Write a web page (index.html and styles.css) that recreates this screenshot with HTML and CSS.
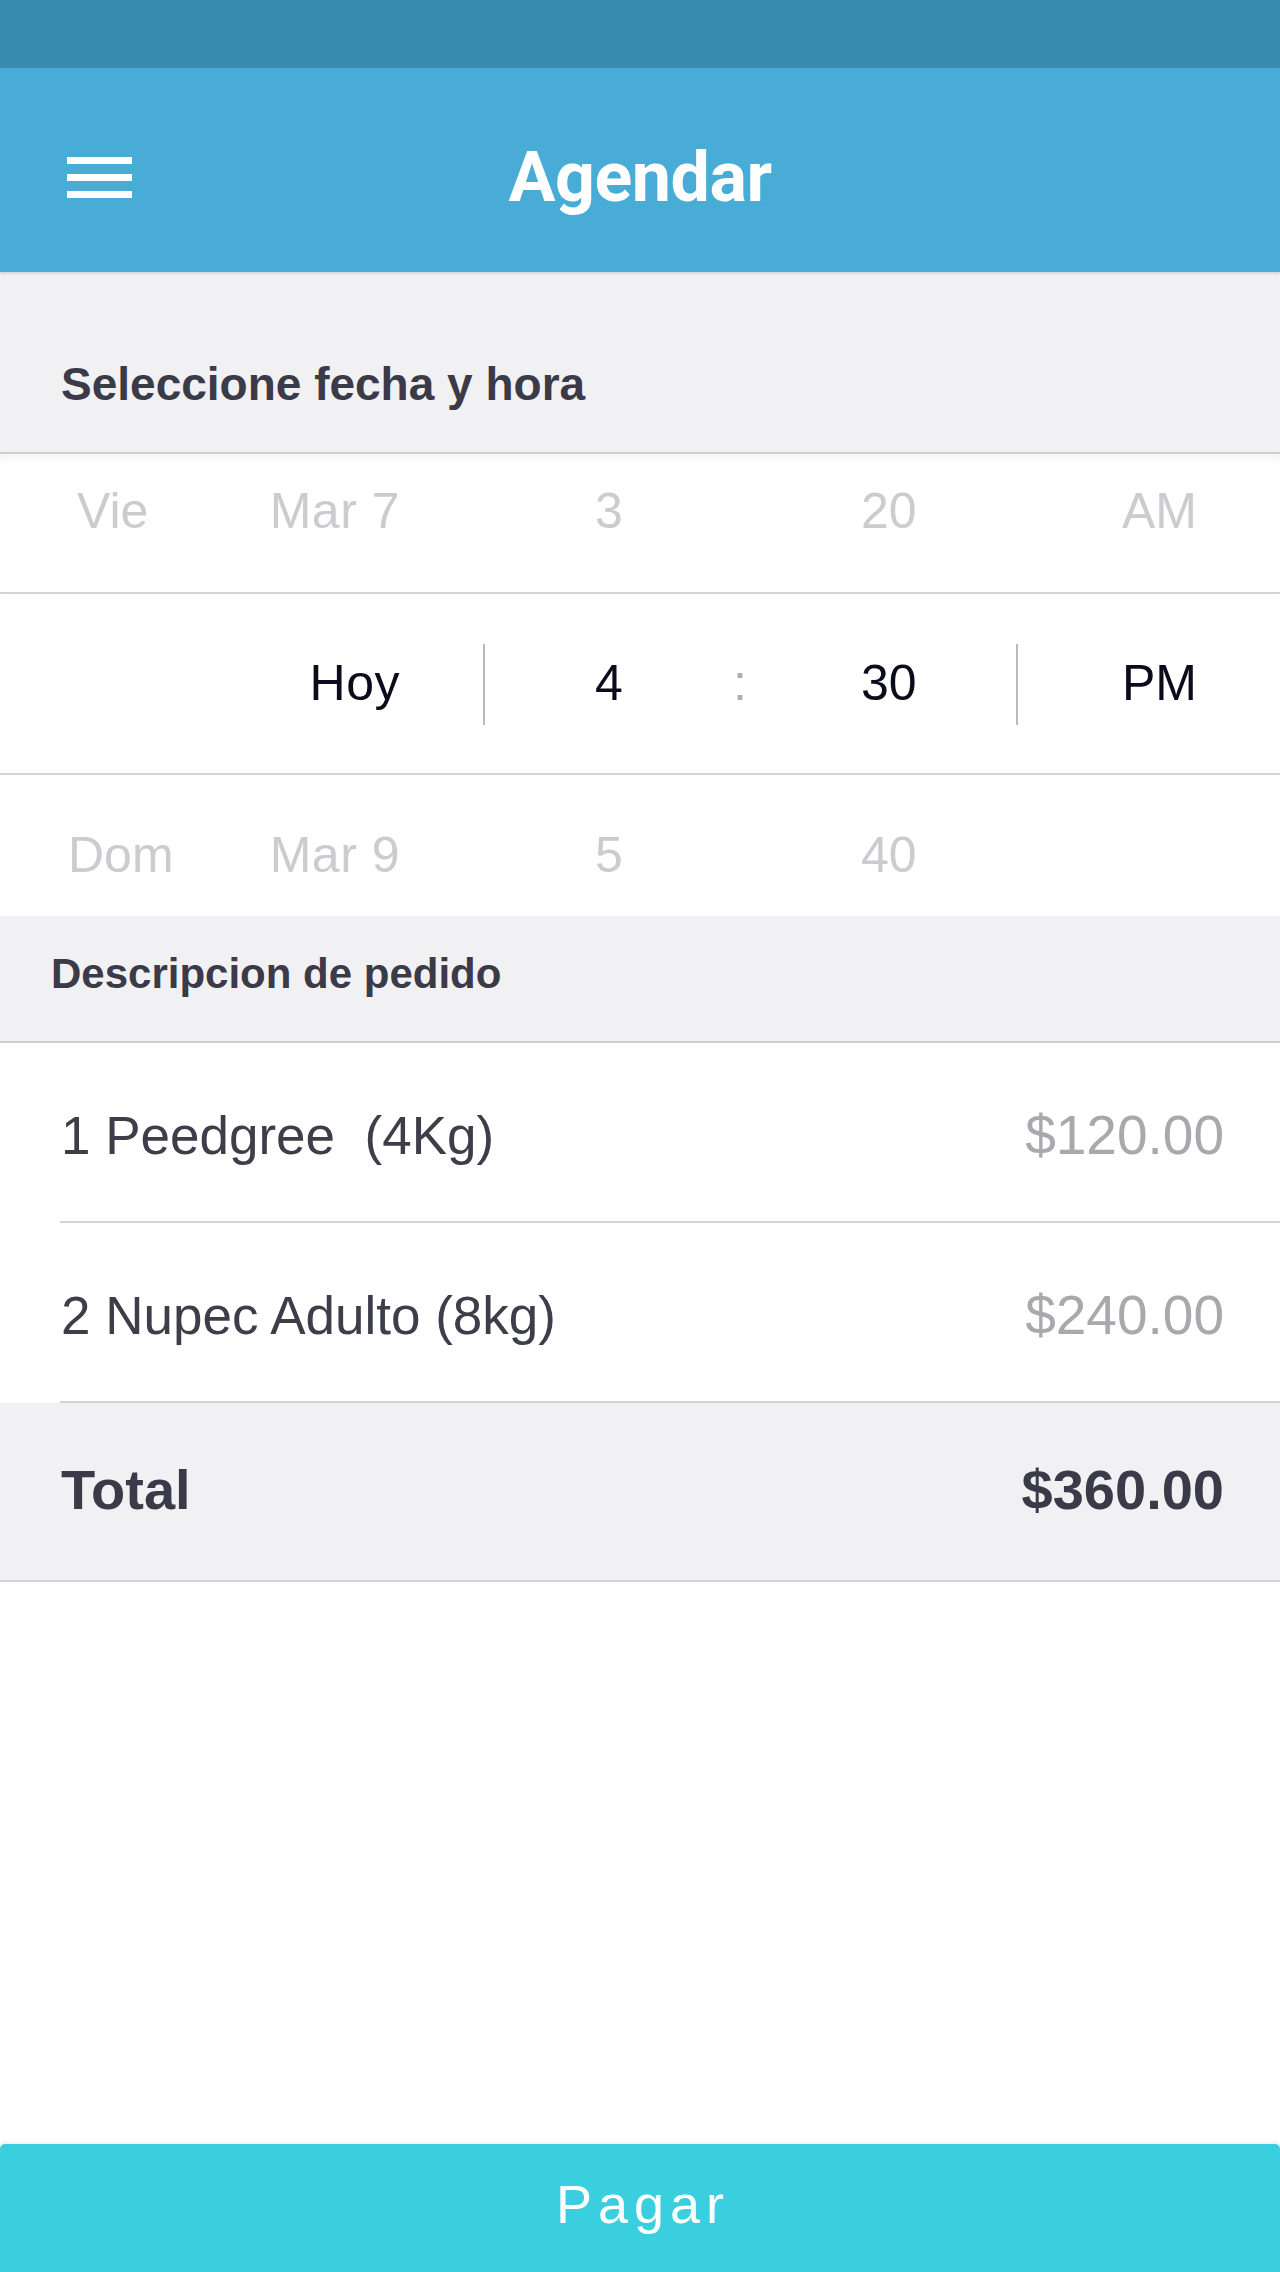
FILE: index.html
```html
<!DOCTYPE html>
<html lang="es">
<head>
<meta charset="utf-8">
<title>Agendar</title>
<link rel="stylesheet" href="styles.css">
</head>
<body>
<div class="app">
  <div class="statusbar"></div>
  <header class="appbar">
    <div class="appbar-left">
      <svg class="menu-icon" width="65" height="41" viewBox="0 0 65 41" aria-hidden="true">
        <rect x="0" y="0" width="65" height="7" fill="#fff"/>
        <rect x="0" y="17" width="65" height="7" fill="#fff"/>
        <rect x="0" y="34" width="65" height="7" fill="#fff"/>
      </svg>
    </div>
    <h1 class="appbar-title">Agendar</h1>
    <div class="appbar-right"></div>
  </header>

  <div class="section-head section-head--date">Seleccione fecha y hora</div>

  <div class="picker">
    <div class="picker-row picker-row--top">
      <span class="cell cell-day">Vie</span>
      <span class="cell cell-date">Mar 7</span>
      <span class="cell cell-gap"></span>
      <span class="cell cell-div"></span>
      <span class="cell cell-hour">3</span>
      <span class="cell cell-colon"></span>
      <span class="cell cell-min">20</span>
      <span class="cell cell-div"></span>
      <span class="cell cell-ampm">AM</span>
    </div>
    <div class="picker-row picker-row--mid">
      <span class="cell cell-day"></span>
      <span class="cell cell-date">Hoy</span>
      <span class="cell cell-gap"></span>
      <span class="cell cell-div"><i class="divider"></i></span>
      <span class="cell cell-hour">4</span>
      <span class="cell cell-colon">:</span>
      <span class="cell cell-min">30</span>
      <span class="cell cell-div"><i class="divider"></i></span>
      <span class="cell cell-ampm">PM</span>
    </div>
    <div class="picker-row picker-row--bottom">
      <span class="cell cell-day cell-day--dom">Dom</span>
      <span class="cell cell-date">Mar 9</span>
      <span class="cell cell-gap"></span>
      <span class="cell cell-div"></span>
      <span class="cell cell-hour">5</span>
      <span class="cell cell-colon"></span>
      <span class="cell cell-min">40</span>
      <span class="cell cell-div"></span>
      <span class="cell cell-ampm"></span>
    </div>
  </div>

  <div class="section-head section-head--order">Descripcion de pedido</div>

  <div class="order">
    <div class="order-item">
      <span class="order-name">1 Peedgree&nbsp; (4Kg)</span>
      <span class="order-price">$120.00</span>
    </div>
    <div class="order-item">
      <span class="order-name">2 Nupec Adulto (8kg)</span>
      <span class="order-price">$240.00</span>
    </div>
  </div>

  <div class="order-total">
    <span class="total-label">Total</span>
    <span class="total-value">$360.00</span>
  </div>

  <button class="pay-button" type="button">Pagar</button>
</div>
</body>
</html>
```

FILE: styles.css
```css
* { box-sizing: border-box; }

html, body {
  margin: 0;
  padding: 0;
  background: #ffffff;
}

body {
  font-family: "Liberation Sans", Arial, sans-serif;
  color: #3b3a48;
}

.app {
  display: flex;
  flex-direction: column;
  min-height: 100vh;
  width: 1280px;
}

.statusbar {
  height: 68px;
  background: #388cae;
}

.appbar {
  height: 204px;
  background: #48acd7;
  display: grid;
  grid-template-columns: 1fr auto 1fr;
  align-items: center;
  padding-top: 14px;
  box-shadow: 0 2px 2px rgba(0, 0, 0, 0.10);
  position: relative;
  z-index: 1;
}

.appbar-left {
  padding-left: 67px;
  display: flex;
  align-items: center;
}

.menu-icon { display: block; }

.appbar-title {
  margin: 0;
  font-family: Roboto, "Liberation Sans", sans-serif;
  font-weight: 700;
  font-size: 70px;
  line-height: 80px;
  color: #ffffff;
  letter-spacing: -0.5px;
}

.section-head {
  background: #f1f1f3;
  border-bottom: 2px solid #cdcdd2;
  font-weight: 700;
  color: #3b3a48;
}

.section-head--date {
  font-size: 46px;
  line-height: 60px;
  padding: 82px 0 38px 61px;
}

.section-head--order {
  font-size: 42px;
  line-height: 56px;
  padding: 30px 0 39px 51px;
}

/* picker */
.picker {
  background: #ffffff;
  box-shadow: inset 0 10px 12px -8px rgba(0, 0, 0, 0.07);
}

.picker-row {
  display: grid;
  grid-template-columns: 230px 170px 83px 2px 248px 12px 271px 2px 262px;
  font-size: 50px;
  line-height: 60px;
  color: #cbcbd0;
}

.picker-row--top {
  height: 140px;
  padding-top: 27px;
  border-bottom: 2px solid #d3d3d8;
}

.picker-row--mid {
  height: 181px;
  padding-top: 59px;
  border-bottom: 2px solid #d3d3d8;
  color: #0b0b1c;
}

.picker-row--bottom {
  height: 141px;
  padding-top: 50px;
}

.cell { display: block; white-space: nowrap; }

.cell-day { padding-left: 77px; }
.cell-day--dom { padding-left: 68px; }

.cell-date { text-align: right; letter-spacing: 0.5px; }

.cell-hour { text-align: center; }

.cell-colon {
  text-align: center;
  color: #aeaeb3;
}

.cell-min { padding-left: 116px; }

.cell-ampm {
  text-align: right;
  padding-right: 83px;
}

.divider {
  display: block;
  width: 2px;
  height: 81px;
  background: #b9b9be;
  margin-top: -9px;
}

/* order */
.order { background: #ffffff; }

.order-item {
  display: flex;
  justify-content: space-between;
  align-items: baseline;
  margin-left: 60px;
  padding: 62px 56px 55px 1px;
  border-bottom: 2px solid #d3d3d8;
  font-size: 53px;
  line-height: 60px;
}

.order-name { color: #3e3e4a; }
.order-price { color: #a8a8ad; font-size: 55px; }

.order-total {
  display: flex;
  justify-content: space-between;
  align-items: baseline;
  background: #f1f1f3;
  border-bottom: 2px solid #d3d3d8;
  padding: 55px 56px 58px 61px;
  font-size: 56px;
  line-height: 64px;
  font-weight: 700;
  color: #3b3a48;
}

.pay-button {
  margin-top: auto;
  height: 128px;
  border: 0;
  border-radius: 5px 5px 0 0;
  background: #3acfde;
  color: #ffffff;
  font-family: "Liberation Sans", Arial, sans-serif;
  font-size: 54px;
  font-weight: 400;
  letter-spacing: 6px;
  padding: 0 0 8px 6px;
  box-shadow: 0 -1px 4px rgba(0, 0, 0, 0.10);
  width: 1280px;
}
```
